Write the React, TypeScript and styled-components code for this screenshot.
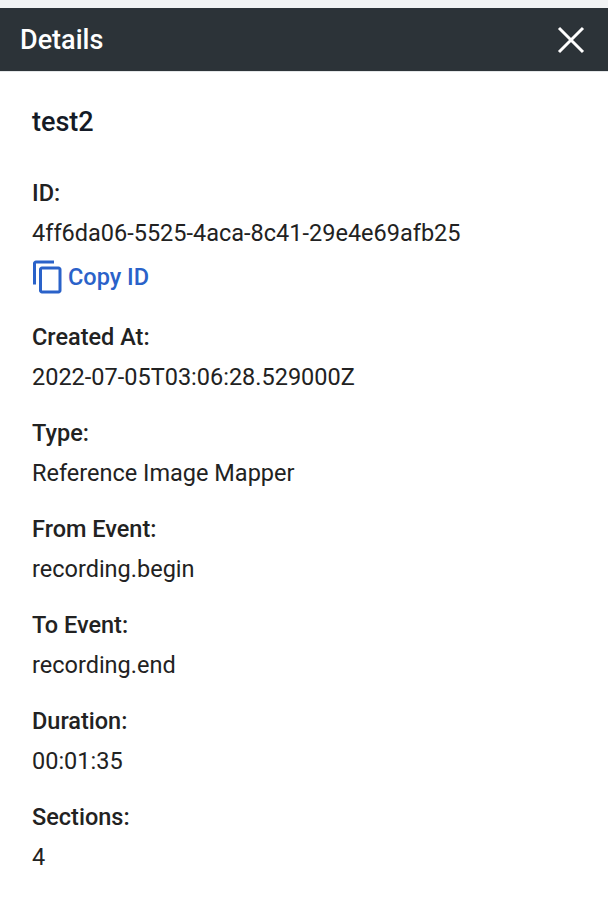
import React from 'react';
import styled, { createGlobalStyle } from 'styled-components';

const Global = createGlobalStyle`
  body { margin: 0; background: #fff; font-family: Roboto, "Liberation Sans", sans-serif; }
`;

const Page = styled.div`
  padding-top: 8px;
  background: #f1f3f4;
`;

const Header = styled.div`
  height: 63px;
  background: #2c3338;
  display: flex;
  align-items: center;
  justify-content: space-between;
  padding: 0 22px 0 20px;
  border-bottom: 1px solid #e3e6e8;
`;

const HeaderTitle = styled.h1`
  margin: 0;
  color: #fff;
  font-size: 27px;
  font-weight: 500;
`;

const CloseButton = styled.button`
  border: none;
  background: none;
  padding: 0;
  display: flex;
  cursor: pointer;
`;

const Body = styled.div`
  background: #fff;
  padding: 34px 32px 40px;
  min-height: 840px;
  box-sizing: border-box;
`;

const Name = styled.h2`
  margin: 0 0 41px;
  font-size: 27px;
  line-height: 32px;
  font-weight: 500;
  color: #141a26;
`;

const Field = styled.div`
  margin-bottom: 28px;
`;

const Label = styled.div`
  font-size: 23.5px;
  font-weight: 500;
  color: #222;
  line-height: 28px;
  margin-bottom: 12px;
`;

const Value = styled.div`
  font-size: 23.5px;
  color: #222;
  line-height: 28px;
`;

const CopyButton = styled.button`
  margin: 12px 0 8px -2px;
  border: none;
  background: none;
  padding: 0;
  display: flex;
  align-items: center;
  gap: 2px;
  color: #2a62c9;
  font-family: inherit;
  font-size: 23.5px;
  font-weight: 500;
  cursor: pointer;
`;

const fields: [string, string][] = [
  ['Created At:', '2022-07-05T03:06:28.529000Z'],
  ['Type:', 'Reference Image Mapper'],
  ['From Event:', 'recording.begin'],
  ['To Event:', 'recording.end'],
  ['Duration:', '00:01:35'],
  ['Sections:', '4'],
];

export default function App() {
  return (
    <Page>
      <Global />
      <Header>
        <HeaderTitle>Details</HeaderTitle>
        <CloseButton>
          <svg width="30" height="30" viewBox="0 0 30 30">
            <path d="M3 3L27 27M27 3L3 27" stroke="#fff" strokeWidth="3" />
          </svg>
        </CloseButton>
      </Header>
      <Body>
        <Name>test2</Name>
        <Field>
          <Label>ID:</Label>
          <Value>4ff6da06-5525-4aca-8c41-29e4e69afb25</Value>
          <CopyButton>
            <svg width="36" height="36" viewBox="0 0 24 24" fill="#2a62c9">
              <path d="M16 1H4c-1.1 0-2 .9-2 2v14h2V3h12V1zm3 4H8c-1.1 0-2 .9-2 2v14c0 1.1.9 2 2 2h11c1.1 0 2-.9 2-2V7c0-1.1-.9-2-2-2zm0 16H8V7h11v14z" />
            </svg>
            Copy ID
          </CopyButton>
        </Field>
        {fields.map(([label, value]) => (
          <Field key={label}>
            <Label>{label}</Label>
            <Value>{value}</Value>
          </Field>
        ))}
      </Body>
    </Page>
  );
}
